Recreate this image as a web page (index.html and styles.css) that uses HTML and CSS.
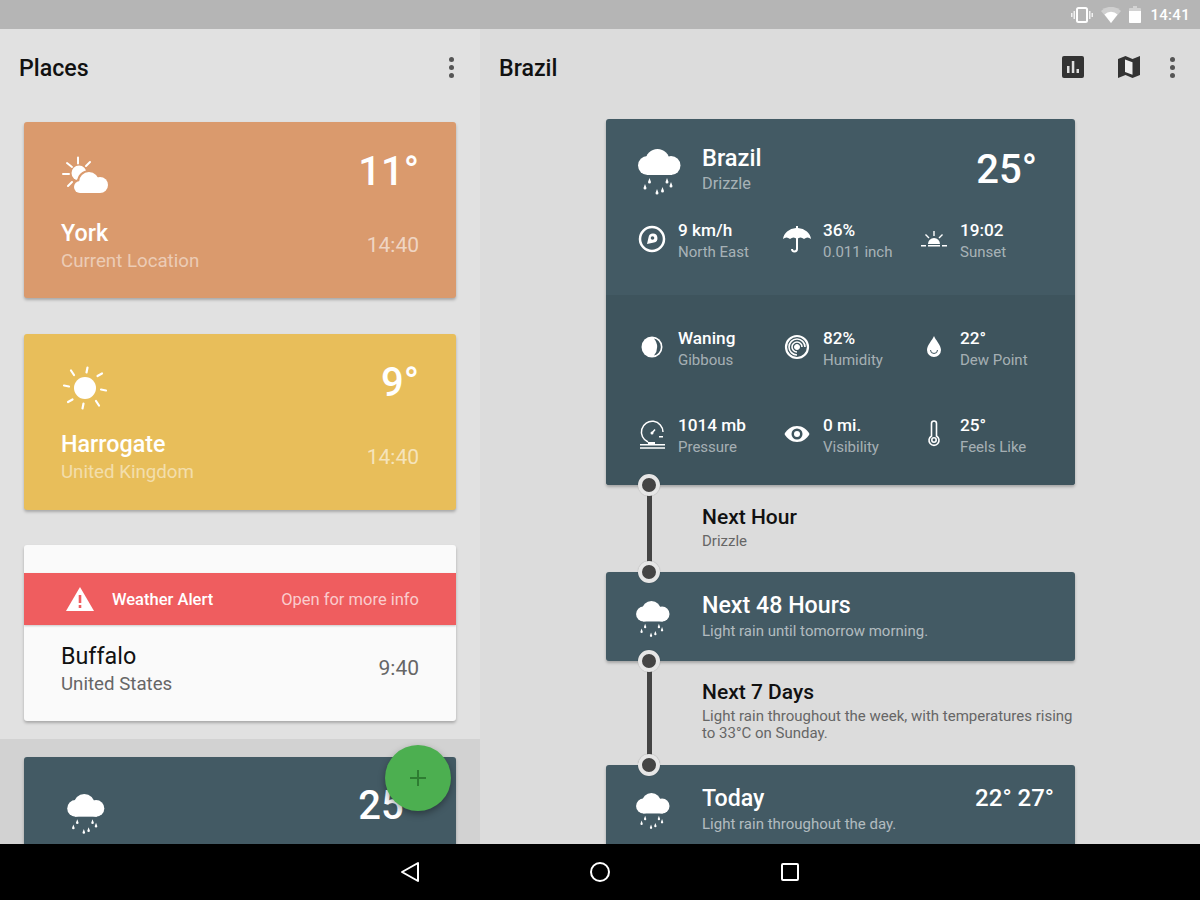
FILE: index.html
```html
<!DOCTYPE html>
<html>
<head lang="en">
    <meta charset="UTF-8">
    <title>Weather</title>
    <link rel="stylesheet" href="styles.css">
</head>
<body>
    <svg class="defs" width="0" height="0">
        <symbol id="rain" viewBox="0 0 43 47">
            <circle cx="19.500" cy="12" r="12"/>
            <circle cx="9.500" cy="16.500" r="9.500"/>
            <circle cx="33" cy="16.500" r="9.500"/>
            <rect x="9" y="14" width="25" height="12"/>
            <path d="M7 35l1.500 4a1.500 1.500 0 0 1-3 0zM11.500 29l1.500 4a1.500 1.500 0 0 1-3 0zM19 40l1.500 4a1.500 1.500 0 0 1-3 0zM24.500 38l1.500 4a1.500 1.500 0 0 1-3 0zM29 29l1.500 4a1.500 1.500 0 0 1-3 0zM33 33l1.500 4a1.500 1.500 0 0 1-3 0z"/>
        </symbol>
    </svg>

    <div class="status">
        <svg class="st-ic" width="22" height="16" viewBox="0 0 22 16">
            <rect x="6" y="1" width="10" height="14" rx="1.500" fill="none" stroke="#fff" stroke-width="2"/>
            <path d="M2.500 4h1.500v8H2.500zM18 4h1.500v8H18zM0 6h1.500v4H0zM20.500 6H22v4h-1.500z" fill="#fff" opacity=".8"/>
        </svg>
        <svg class="st-ic" width="20" height="16" viewBox="0 0 20 16">
            <path d="M0 4a14 14 0 0 1 20 0L10 16z" fill="#fff" opacity=".35"/>
            <path d="M3.500 7.500a9 9 0 0 1 13 0L10 16z" fill="#fff"/>
        </svg>
        <svg class="st-ic" width="12" height="17" viewBox="0 0 12 17">
            <path d="M4 0h4v2h3a1 1 0 0 1 1 1v13a1 1 0 0 1-1 1H1a1 1 0 0 1-1-1V3a1 1 0 0 1 1-1h3z" fill="#fff" opacity=".4"/>
            <path d="M0 5h12v11a1 1 0 0 1-1 1H1a1 1 0 0 1-1-1z" fill="#fff"/>
        </svg>
        <span class="clock">14:41</span>
    </div>

    <div class="main">
        <div class="places">
            <div class="bar">
                <h1>Places</h1>
                <span class="dots"><i></i><i></i><i></i></span>
            </div>
            <div class="list">
                <div class="place orange">
                    <div class="place-top">
                        <svg class="wx" width="48" height="38" viewBox="0 0 48 38" fill="#fff">
                            <path d="M17 1.500v6M6 7l5 4M29 6l-4 4M2 18h6M7 30l4-4" stroke="#fff" stroke-width="2" stroke-linecap="round"/>
                            <circle cx="18" cy="17" r="7.500"/>
                            <g fill="#da9a6d" stroke="#da9a6d" stroke-width="4">
                                <circle cx="28" cy="26" r="10"/>
                                <circle cx="19" cy="31" r="6"/>
                            </g>
                            <circle cx="28" cy="26" r="10"/>
                            <circle cx="39" cy="29" r="8"/>
                            <circle cx="19" cy="31" r="6"/>
                            <rect x="19" y="28" width="20" height="9"/>
                        </svg>
                        <span class="temp">11°</span>
                    </div>
                    <div class="place-bottom">
                        <div>
                            <div class="name">York</div>
                            <div class="sub">Current Location</div>
                        </div>
                        <span class="time">14:40</span>
                    </div>
                </div>

                <div class="place yellow">
                    <div class="place-top">
                        <svg class="wx" width="48" height="48" viewBox="0 0 48 48" fill="#fff">
                            <circle cx="24" cy="24" r="11"/>
                            <path d="M26.500 3.500l-1 5M41 9.500l-4.500 2.500M45 26.500l-5-1M38 41.500l-3-4.500M21.500 44.500l1-5M7 38l4.500-2.500M3 21.500l5 1M10 6.500l3 4.500" stroke="#fff" stroke-width="2.200" stroke-linecap="round"/>
                        </svg>
                        <span class="temp">9°</span>
                    </div>
                    <div class="place-bottom">
                        <div>
                            <div class="name">Harrogate</div>
                            <div class="sub">United Kingdom</div>
                        </div>
                        <span class="time">14:40</span>
                    </div>
                </div>

                <div class="place white">
                    <div class="alert">
                        <svg width="28" height="24" viewBox="0 0 28 24">
                            <path d="M14 0l14 24H0z" fill="#fff"/>
                            <path d="M12.700 8h2.600v8h-2.600zM12.700 18h2.600v3h-2.600z" fill="#ef5d5f"/>
                        </svg>
                        <span class="alert-title">Weather Alert</span>
                        <span class="alert-more">Open for more info</span>
                    </div>
                    <div class="place-bottom">
                        <div>
                            <div class="name">Buffalo</div>
                            <div class="sub">United States</div>
                        </div>
                        <span class="time">9:40</span>
                    </div>
                </div>

                <div class="selected">
                    <div class="place slate">
                        <div class="place-top">
                            <svg class="wx" width="38" height="41" fill="#fff"><use href="#rain"/></svg>
                            <span class="temp">25°</span>
                        </div>
                    </div>
                </div>
            </div>
            <div class="fab">
                <svg width="18" height="18" viewBox="0 0 18 18"><path d="M9 1v16M1 9h16" stroke="#2e7d32" stroke-width="2"/></svg>
            </div>
        </div>

        <div class="detail">
            <div class="bar">
                <h1>Brazil</h1>
                <div class="actions">
                    <svg class="chart" width="22" height="22" viewBox="0 0 22 22">
                        <rect width="22" height="22" rx="2" fill="#333"/>
                        <path d="M5 10h2.500v7H5zM9.800 5h2.500v12H9.800zM14.500 13H17v4h-2.500z" fill="#e0e0e0"/>
                    </svg>
                    <svg width="22" height="22" viewBox="0 0 22 22">
                        <path d="M0 3l7.500-3L14.500 3 22 0v19l-7.500 3-7-3L0 22z" fill="#333"/>
                        <path d="M7 3.500l7.500 2.800v12.400L7 15.900z" fill="#eee"/>
                    </svg>
                    <span class="dots"><i></i><i></i><i></i></span>
                </div>
            </div>

            <div class="timeline">
                <div class="card big">
                    <div class="big-top">
                        <div class="big-head">
                            <svg class="big-ic" width="43" height="47" fill="#fff"><use href="#rain"/></svg>
                            <div class="big-title">
                                <div class="card-title">Brazil</div>
                                <div class="card-sub">Drizzle</div>
                            </div>
                            <span class="big-temp">25°</span>
                        </div>
                        <div class="stats">
                            <div class="stat">
                                <svg width="28" height="28" viewBox="0 0 28 28" fill="none">
                                    <circle cx="14" cy="14" r="12" stroke="#fff" stroke-width="2.500"/>
                                    <path d="M9 19l1.500-6.500a4.500 4.500 0 1 1 5.500 5z" fill="#fff"/>
                                    <circle cx="14.500" cy="13" r="1.800" fill="#435a64"/>
                                </svg>
                                <div><b>9 km/h</b><span>North East</span></div>
                            </div>
                            <div class="stat">
                                <svg width="28" height="28" viewBox="0 0 28 28" fill="#fff">
                                    <path d="M0 14a14 12 0 0 1 13-11V1h2v2a14 12 0 0 1 13 11q-3.500-3-7 0-3.500-3-7 0-3.500-3-7 0-3.500-3-7 0z"/>
                                    <path d="M14 13v11a2.500 2.500 0 0 1-5 0" fill="none" stroke="#fff" stroke-width="2"/>
                                </svg>
                                <div><b>36%</b><span>0.011 inch</span></div>
                            </div>
                            <div class="stat">
                                <svg width="28" height="28" viewBox="0 0 28 28" fill="#fff">
                                    <path d="M8 19a6 6 0 0 1 12 0zM1 20h5v1.500H1zM8 20h12v1.500H8zM22 20h5v1.500h-5zM13.300 6h1.400v5h-1.400z"/>
                                    <path d="M5.500 9.500l3.500 3.500M22.500 9.500L19 13" stroke="#fff" stroke-width="1.400"/>
                                </svg>
                                <div><b>19:02</b><span>Sunset</span></div>
                            </div>
                        </div>
                    </div>
                    <div class="big-low">
                        <div class="stats">
                            <div class="stat">
                                <svg width="28" height="28" viewBox="0 0 28 28">
                                    <circle cx="14" cy="14" r="10.500" fill="#fff"/>
                                    <path d="M16 5.500a8.700 8.700 0 0 1 0 17a13 13 0 0 0 0-17z" fill="#3e545d"/>
                                </svg>
                                <div><b>Waning</b><span>Gibbous</span></div>
                            </div>
                            <div class="stat">
                                <svg width="28" height="28" viewBox="0 0 28 28" fill="none" stroke="#fff">
                                    <circle cx="14" cy="14" r="11" stroke-width="2.200"/>
                                    <path d="M14 19a5 5 0 1 1 5-5M14 22a8 8 0 1 1 8-8" stroke-width="1.600"/>
                                    <circle cx="14" cy="14" r="2.500" fill="#fff"/>
                                </svg>
                                <div><b>82%</b><span>Humidity</span></div>
                            </div>
                            <div class="stat">
                                <svg width="28" height="28" viewBox="0 0 28 28">
                                    <path d="M14 3c1.500 4 7 9 7 14a7 7 0 0 1-14 0c0-5 5.500-10 7-14z" fill="#fff"/>
                                    <path d="M10.500 17a3.500 3.500 0 0 0 7 0" fill="none" stroke="#3e545d" stroke-width="1"/>
                                </svg>
                                <div><b>22°</b><span>Dew Point</span></div>
                            </div>
                            <div class="stat">
                                <svg width="28" height="30" viewBox="0 0 28 30" fill="none" stroke="#fff" stroke-width="1.500">
                                    <path d="M10 22A10.800 10.800 0 1 1 25 12M21 16.700h4M14 13l3-3.500M2 24.700h25M2 28h25"/>
                                    <path d="M10 22h7v2h-7z" fill="#fff" stroke="none"/>
                                    <circle cx="14" cy="13" r="1.500" fill="#fff" stroke="none"/>
                                </svg>
                                <div><b>1014 mb</b><span>Pressure</span></div>
                            </div>
                            <div class="stat">
                                <svg width="28" height="28" viewBox="0 0 28 28">
                                    <path d="M14 6c5.500 0 10 3.500 12.500 8-2.500 4.500-7 8-12.500 8S4 18.500 1.500 14C4 9.500 8.500 6 14 6z" fill="#fff"/>
                                    <circle cx="14" cy="14" r="5.500" fill="#3e545d"/>
                                    <circle cx="14" cy="14" r="3" fill="#fff"/>
                                </svg>
                                <div><b>0 mi.</b><span>Visibility</span></div>
                            </div>
                            <div class="stat">
                                <svg width="28" height="28" viewBox="0 0 28 28" fill="none" stroke="#fff" stroke-width="1.600">
                                    <path d="M11.500 16V3.500a2.500 2.500 0 0 1 5 0V16a5 5 0 1 1-5 0z"/>
                                    <circle cx="14" cy="20" r="2.200"/>
                                </svg>
                                <div><b>25°</b><span>Feels Like</span></div>
                            </div>
                        </div>
                    </div>
                </div>

                <div class="gap gap-hour">
                    <i class="node node-top"></i>
                    <i class="node node-bottom"></i>
                    <div class="gap-title">Next Hour</div>
                    <div class="gap-sub">Drizzle</div>
                </div>

                <div class="card row row-48">
                    <svg class="row-ic" width="34" height="37" fill="#fff"><use href="#rain"/></svg>
                    <div>
                        <div class="row-title">Next 48 Hours</div>
                        <div class="row-sub">Light rain until tomorrow morning.</div>
                    </div>
                </div>

                <div class="gap gap-days">
                    <i class="node node-top"></i>
                    <i class="node node-bottom"></i>
                    <div class="gap-title">Next 7 Days</div>
                    <div class="gap-sub">Light rain throughout the week, with temperatures rising to 33°C on Sunday.</div>
                </div>

                <div class="card row row-today">
                    <svg class="row-ic" width="34" height="37" fill="#fff"><use href="#rain"/></svg>
                    <div class="row-text">
                        <div class="row-title">Today</div>
                        <div class="row-sub">Light rain throughout the day.</div>
                    </div>
                    <div class="range">22° 27°</div>
                </div>
            </div>
        </div>
    </div>

    <div class="navbar">
        <svg width="22" height="22" viewBox="0 0 22 22"><path d="M19 2v18L3 11z" fill="none" stroke="#fff" stroke-width="2" stroke-linejoin="round"/></svg>
        <svg width="22" height="22" viewBox="0 0 22 22"><circle cx="11" cy="11" r="9" fill="none" stroke="#fff" stroke-width="2"/></svg>
        <svg width="22" height="22" viewBox="0 0 22 22"><rect x="3" y="3" width="16" height="16" rx="1" fill="none" stroke="#fff" stroke-width="2"/></svg>
    </div>
</body>
</html>
```

FILE: styles.css
```css
*{
    margin: 0;
    padding: 0;
    box-sizing: border-box;
}
body{
    width: 1200px;
    height: 900px;
    overflow: hidden;
    display: flex;
    flex-direction: column;
    font-family: Roboto, "Liberation Sans", sans-serif;
    background: #000;
}
.defs{
    position: absolute;
}
.status{
    height: 29px;
    background: #b5b5b5;
    display: flex;
    align-items: center;
    justify-content: flex-end;
    gap: 8px;
    padding-right: 10px;
}
.clock{
    color: #fff;
    font-size: 15px;
    font-weight: 500;
    margin-left: 1px;
    letter-spacing: .3px;
}
.main{
    height: 815px;
    display: flex;
    overflow: hidden;
}
.places{
    width: 480px;
    background: #e1e1e1;
    position: relative;
}
.detail{
    flex: 1;
    background: #dcdcdc;
}
.bar{
    height: 78px;
    display: flex;
    align-items: center;
    justify-content: space-between;
    padding: 0 25px 0 19px;
}
.bar h1{
    font-size: 23.2px;
    font-weight: 500;
    color: #111;
}
.places .bar{
    padding-right: 26px;
}
.places .dots{
    margin-top: -2px;
}
.dots{
    display: flex;
    flex-direction: column;
    gap: 3px;
}
.dots i{
    width: 5px;
    height: 5px;
    border-radius: 50%;
    background: #555;
}
.actions{
    display: flex;
    align-items: center;
    gap: 30px;
    margin-top: -2px;
}
.chart{
    margin-right: 4px;
}

/* places list */
.list{
    padding-top: 15px;
    display: flex;
    flex-direction: column;
}
.place{
    width: 432px;
    height: 176px;
    margin: 0 0 36px 24px;
    border-radius: 3px;
    box-shadow: 0 2px 3px rgba(0,0,0,.25);
    padding: 0 37px;
    overflow: hidden;
}
.orange{
    background: #da9a6d;
}
.yellow{
    background: #e8be5a;
    margin-bottom: 35px;
}
.white{
    background: #fafafa;
    padding: 0;
    margin-bottom: 18px;
}
.slate{
    background: #435a64;
    margin-bottom: 0;
    height: 100px;
}
.place-top{
    height: 95px;
    display: flex;
    justify-content: space-between;
    align-items: center;
}
.orange .place-top{
    height: 96px;
}
.place-top .temp{
    color: #fff;
    font-size: 40px;
    font-weight: 500;
}
.orange .temp{
    margin-top: 2px;
}
.orange .wx{
    margin-top: 10px;
}
.yellow .temp{
    margin-top: 1px;
}
.yellow .wx{
    margin-top: 13px;
}
.place-bottom{
    display: flex;
    justify-content: space-between;
    align-items: center;
    color: #fff;
}
.name{
    font-size: 23.3px;
    font-weight: 500;
    line-height: 30px;
}
.sub{
    font-size: 18.7px;
    line-height: 26px;
    color: rgba(255,255,255,.5);
}
.time{
    font-size: 21px;
    color: rgba(255,255,255,.6);
}
.orange .time{
    margin-top: -2px;
}
.alert{
    height: 52px;
    margin-top: 28px;
    background: #ef5d5f;
    display: flex;
    align-items: center;
    padding: 0 37px 0 42px;
    box-shadow: 0 1px 2px rgba(0,0,0,.2);
}
.alert-title{
    color: #fff;
    font-size: 16.5px;
    font-weight: 500;
    margin-left: 18px;
    flex: 1;
}
.alert-more{
    color: rgba(255,255,255,.7);
    font-size: 16.5px;
}
.white .place-bottom{
    padding: 16px 37px 0;
    color: #111;
}
.white .name{
    font-weight: 400;
}
.white .sub{
    color: #666;
}
.white .time{
    color: #666;
    margin-top: -2px;
}
.selected{
    background: #d2d2d2;
    padding-top: 18px;
    height: 200px;
}
.slate .place-top{
    height: 96px;
}
.slate .temp{
    margin-top: 1px;
}
.slate .wx{
    margin-top: 18px;
    margin-left: 6px;
}
.fab{
    position: absolute;
    left: 385px;
    top: 716px;
    width: 66px;
    height: 66px;
    border-radius: 50%;
    background: #4caf50;
    box-shadow: 0 3px 7px rgba(0,0,0,.35);
    display: flex;
    align-items: center;
    justify-content: center;
}

/* timeline */
.timeline{
    width: 469px;
    margin: 12px 0 0 126px;
}
.card{
    background: #435a64;
    border-radius: 3px;
    box-shadow: 0 2px 3px rgba(0,0,0,.25);
    color: #fff;
}
.big{
    height: 366px;
    overflow: hidden;
}
.big-top{
    height: 176px;
    padding: 0 32px;
}
.big-low{
    height: 190px;
    background: #3e545d;
    padding: 32px 32px 0;
}
.big-head{
    height: 100px;
    display: flex;
    align-items: center;
}
.big-ic{
    margin-top: 6px;
}
.big-title{
    flex: 1;
    margin-left: 21px;
}
.card-title{
    font-size: 23.6px;
    font-weight: 500;
    line-height: 30px;
}
.card-sub{
    font-size: 16.3px;
    line-height: 22px;
    color: rgba(255,255,255,.55);
}
.big-temp{
    font-size: 40px;
    font-weight: 500;
    margin-right: 6px;
}
.stats{
    display: grid;
    grid-template-columns: 145px 137px 1fr;
    grid-auto-rows: 87px;
}
.stat{
    display: flex;
    align-items: flex-start;
    gap: 12px;
}
.stat svg{
    margin-top: 6px;
    flex: none;
}
.stat b{
    display: block;
    font-size: 17.2px;
    font-weight: 500;
    line-height: 22px;
}
.stat span{
    display: block;
    font-size: 15px;
    line-height: 23px;
    color: rgba(255,255,255,.55);
}
.gap{
    position: relative;
    padding-left: 96px;
}
.gap::before{
    content: "";
    position: absolute;
    left: 41px;
    top: 0;
    bottom: 0;
    width: 5px;
    background: #444;
    z-index: 2;
}
.node{
    position: absolute;
    left: 32px;
    width: 22px;
    height: 22px;
    border-radius: 50%;
    background: #444;
    border: 4px solid #e6e6e6;
    z-index: 3;
    box-shadow: 0 0 1px rgba(0,0,0,.3);
}
.node-top{
    top: -11px;
}
.node-bottom{
    bottom: -11px;
}
.gap-hour{
    height: 87px;
    padding-top: 19px;
}
.gap-days{
    height: 104px;
    padding-top: 18px;
}
.gap-title{
    font-size: 21px;
    font-weight: 500;
    color: #111;
    line-height: 27px;
}
.gap-sub{
    font-size: 15px;
    line-height: 17px;
    color: #666;
    margin-top: 2px;
}
.row{
    display: flex;
    align-items: center;
    padding-left: 30px;
}
.row-48{
    height: 89px;
    padding-bottom: 2px;
}
.row-48 .row-ic{
    margin-top: 8px;
}
.row-today{
    height: 100px;
    align-items: flex-start;
    padding-top: 18px;
    padding-right: 21px;
    border-radius: 3px 3px 0 0;
}
.row-ic{
    margin-right: 32px;
    flex: none;
}
.row-today .row-ic{
    margin-top: 10px;
}
.row-text{
    flex: 1;
}
.row-title{
    font-size: 23.2px;
    font-weight: 500;
    line-height: 30px;
}
.row-sub{
    font-size: 15px;
    line-height: 22px;
    color: rgba(255,255,255,.6);
}
.range{
    font-size: 24px;
    font-weight: 500;
    line-height: 30px;
}
.navbar{
    height: 56px;
    background: #000;
    display: flex;
    align-items: center;
    justify-content: center;
    gap: 168px;
}
```
